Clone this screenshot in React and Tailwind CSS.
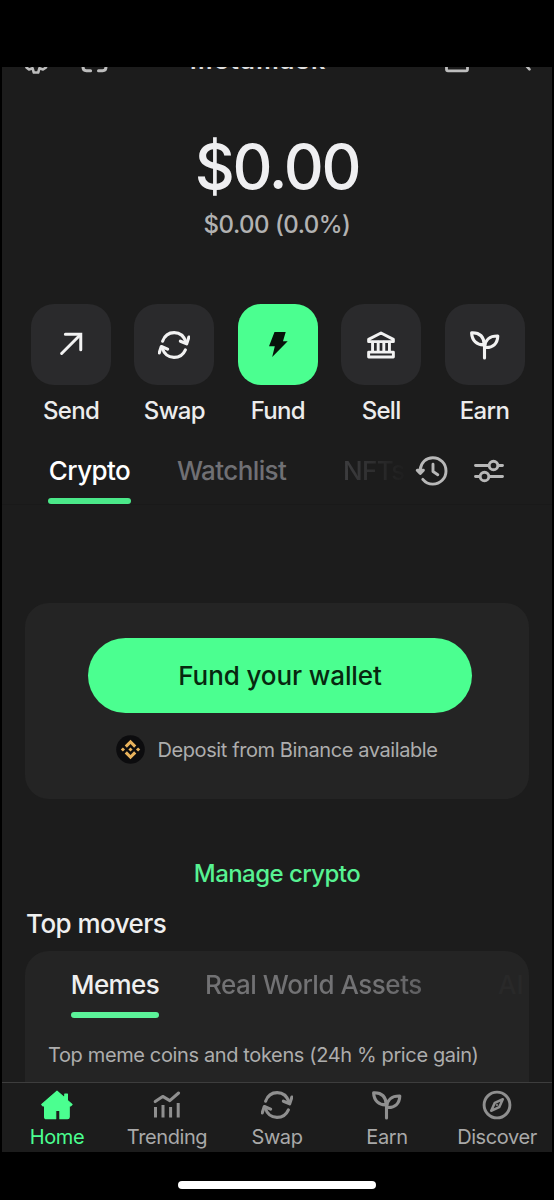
import React from 'react';

function SwapIcon({ className }) {
  return (
    <svg viewBox="0 0 32 32" className={className} fill="none" stroke="currentColor" strokeWidth="3.1" strokeLinecap="round" strokeLinejoin="round">
      <path d="M4.600 12.200C6.600 6.600 11 3.600 16.200 3.600c5.600 0 10 3.600 12 10" />
      <path d="M22.400 12.200l6.300 2.600 2.200-6.800" />
      <path d="M27.400 20.800c-2 4.600-6.200 7.600-11.400 7.600-5.600 0-10-3.600-12-10" />
      <path d="M9.600 20.200l-6.300-2.700-2.100 6.400" />
    </svg>
  );
}

function EarnIcon({ className }) {
  return (
    <svg viewBox="0 0 32 32" className={className} fill="none" stroke="currentColor" strokeWidth="3.100" strokeLinecap="round" strokeLinejoin="round">
      <path d="M15.500 29V15.600" />
      <path d="M15.300 15.800C7.800 16.200 3 11.600 2.600 3.800c7.600-.3 12.300 3.600 12.700 12z" />
      <path d="M15.600 18.400c.2-7.200 5.200-11.600 13.200-11.400-.2 7.400-4.800 12.200-13.200 11.400z" />
    </svg>
  );
}

function SendIcon({ className }) {
  return (
    <svg viewBox="0 0 32 32" className={className} fill="none" stroke="currentColor" strokeWidth="3.200" strokeLinecap="round" strokeLinejoin="miter">
      <path d="M6 25L26 5" />
      <path d="M10 4.600h16.400V21" />
    </svg>
  );
}

function BoltIcon({ className }) {
  return (
    <svg viewBox="0 0 32 32" className={className} fill="currentColor">
      <path d="M12.500 3h11.200l-2.700 9.300h4.700L10.200 28l2.600-10.800H7z" />
    </svg>
  );
}

function BankIcon({ className }) {
  return (
    <svg viewBox="0 0 32 32" className={className} fill="none" stroke="currentColor" strokeWidth="3.100" strokeLinecap="round" strokeLinejoin="round">
      <path d="M2.800 12.400V10L16 3.200 29.200 10v2.400z" />
      <path d="M7 13v10M13 13v10M19 13v10M25 13v10" />
      <path d="M2.800 23.600h26.400v5.200H2.800z" />
    </svg>
  );
}

function HistoryIcon() {
  return (
    <svg viewBox="0 0 34 32" className="h-8 w-[34px]" fill="none" stroke="currentColor" strokeWidth="2.900" strokeLinecap="round" strokeLinejoin="round">
      <path d="M5.200 14.500C6 7.600 11 2.700 17.800 2.700c7.400 0 13.200 5.800 13.200 13.200s-5.800 13.200-13.200 13.200c-4 0-7.600-1.800-10-4.700" />
      <path d="M18 9.200v7.300l4.800 3.200" />
      <path d="M2.200 15.200h6.200l-3.100 3.300z" fill="currentColor" />
    </svg>
  );
}

function FilterIcon() {
  return (
    <svg viewBox="0 0 32 26" className="h-[26px] w-8" fill="none" stroke="currentColor" strokeWidth="2.900" strokeLinecap="round">
      <path d="M2.500 7.500h13M25.500 7.500h4" />
      <circle cx="20.500" cy="7.500" r="4.300" />
      <path d="M2.500 18.500h4M16.500 18.500h13" />
      <circle cx="11.500" cy="18.500" r="4.300" />
    </svg>
  );
}

function HomeIcon({ className }) {
  return (
    <svg viewBox="0 0 32 32" className={className} fill="currentColor" stroke="currentColor" strokeWidth="1.200" strokeLinejoin="round">
      <path d="M16 2.200l7.800 6.800V5h2.600v6.400l4.600 4.100-1.600 1.500h-1.200V28c0 1-.6 1.700-1.700 1.700h-7.600V21.400h-4.200v8.300H5.300c-1.100 0-1.700-.7-1.700-1.700V17H2.200L.8 15.500z" />
    </svg>
  );
}

function TrendingIcon({ className }) {
  return (
    <svg viewBox="0 0 32 32" className={className} fill="none" stroke="currentColor" strokeWidth="3" strokeLinejoin="round">
      <path d="M4.500 18v10.500M12 16v12.500M19.600 18v10.500M27.200 14v14.500" />
      <path d="M4.200 12.600l7.500-5.200 7.100 4.200L27.600 4" strokeLinecap="round" />
    </svg>
  );
}

function DiscoverIcon({ className }) {
  return (
    <svg viewBox="0 0 32 32" className={className} fill="none" stroke="currentColor" strokeWidth="2.900" strokeLinejoin="round">
      <circle cx="16" cy="16" r="12.900" />
      <path d="M21.800 10.200l-3.600 8-8 3.600 3.600-8z" strokeWidth="2.500" />
      <circle cx="16" cy="16" r=".8" strokeWidth="1" />
    </svg>
  );
}

function BinanceLogo() {
  return (
    <svg viewBox="0 0 29 29" className="size-[29px]">
      <circle cx="14.500" cy="14.500" r="14.300" fill="#0c0c0e" />
      <g fill="#e9b35c">
        <path d="M14.500 4.700l5.800 5.800-2.200 2.200-3.600-3.600-3.600 3.600-2.200-2.200z" />
        <path d="M14.500 24.300l5.800-5.800-2.200-2.200-3.600 3.600-3.600-3.600-2.200 2.200z" />
        <path d="M14.500 12.400l2.100 2.100-2.100 2.100-2.100-2.100z" />
        <path d="M6.900 12.400L9 14.500l-2.100 2.100-2.100-2.100z" />
        <path d="M22.100 12.400l2.100 2.100-2.100 2.100-2.100-2.100z" />
      </g>
    </svg>
  );
}

const actions = [
  { label: 'Send', Icon: SendIcon },
  { label: 'Swap', Icon: SwapIcon },
  { label: 'Fund', Icon: BoltIcon, primary: true },
  { label: 'Sell', Icon: BankIcon },
  { label: 'Earn', Icon: EarnIcon },
];

const navItems = [
  { label: 'Home', Icon: HomeIcon, active: true },
  { label: 'Trending', Icon: TrendingIcon },
  { label: 'Swap', Icon: SwapIcon },
  { label: 'Earn', Icon: EarnIcon },
  { label: 'Discover', Icon: DiscoverIcon },
];

// Header is scrolled almost fully out of view, only its lower edge shows
function ScrolledHeader() {
  return (
    <header className="relative h-2 shrink-0 overflow-hidden text-[#bdbdbd]">
      <svg viewBox="0 0 550 8" className="h-2 w-[550px]" fill="none" stroke="currentColor" strokeWidth="2.600" strokeLinecap="round" strokeLinejoin="round">
        <path d="M24.500.5l2.500 2 3.500-1.300 1.300 4.300h4.400l1.300-4.300L41 2.500l3-2" />
        <path d="M81 0c0 2.400 1.200 3.700 3.400 3.700h4.200M96.500 3.700h4.100c2.200 0 3.400-1.300 3.400-3.700" strokeWidth="3" />
        <path d="M444.500-2v4.300c0 1 .5 1.600 1.500 1.600h18c1 0 1.500-.6 1.500-1.600V-2" strokeWidth="2.800" />
        <path d="M523.500-2l4 4.300" />
      </svg>
      <span className="absolute bottom-[-1px] left-[188px] text-[25px] leading-8 font-semibold tracking-[1.400px] text-[#e0e0e0]">
        metamask
      </span>
    </header>
  );
}

function App() {
  return (
    <div className="flex h-[1200px] w-[554px] flex-col overflow-hidden bg-black px-0.5 pt-[67px] font-['Inter',sans-serif] whitespace-nowrap">
      <main className="flex h-[1015px] shrink-0 flex-col overflow-hidden bg-[#1c1c1c]">
        <ScrolledHeader />

        <section className="flex flex-col items-center pt-[60px]">
          <h1 className="h-16 text-[62px] leading-[64px] font-medium tracking-[-2.2px] text-[#efeff1]">$0.00</h1>
          <p className="mt-3 h-7 text-[24px] leading-7 font-medium tracking-[-0.5px] text-[#b2b2b2]">$0.00 (0.0%)</p>
        </section>

        <section className="mt-[65px] flex justify-between pr-[27.500px] pl-[29px]">
          {actions.map(({ label, Icon, primary }) => (
            <div key={label} className="flex w-20 flex-col items-center">
              <div
                className={`flex h-[81px] w-20 items-center justify-center rounded-[23px] ${
                  primary ? 'bg-[#4bff90] text-[#07130b]' : 'bg-[#2a2a2c] text-[#f2f2f2]'
                }`}
              >
                <Icon className={label === 'Send' || label === 'Sell' ? 'size-[30px]' : 'size-8'} />
              </div>
              <span className="mt-3 h-7 text-[24px] leading-7 font-medium tracking-[-0.7px] text-[#ececec]">
                {label}
              </span>
            </div>
          ))}
        </section>

        <section className="mt-[19px] flex h-[61px] shrink-0 items-start border-b border-[#191919] pl-[46px]">
          <div className="flex h-[60px] w-[83px] flex-col items-center justify-between">
            <span className="pt-[11px] text-[26px] leading-8 font-medium tracking-[-0.6px] text-white">Crypto</span>
            <span className="h-1.5 w-full rounded-full bg-[#4be889]" />
          </div>
          <span className="ml-[46px] w-[111px] pt-[11px] text-[26px] leading-8 font-medium tracking-[-0.6px] text-[#707074]">
            Watchlist
          </span>
          <span className="ml-[55px] w-[65px] bg-linear-to-r from-[#3e3e40] to-[#1c1c1c] bg-clip-text pt-[11px] text-[26px] leading-8 font-medium tracking-[-0.6px] text-transparent">
            NFTs
          </span>
          <div className="ml-[7px] flex items-center gap-6 pt-[11px] text-[#b8b8b8]">
            <HistoryIcon />
            <FilterIcon />
          </div>
        </section>

        <section className="mx-[23px] mt-[98px] flex h-[196px] shrink-0 flex-col items-center rounded-[24px] bg-[#242424] pt-[35px]">
          <button className="ml-1.5 h-[75px] w-[384px] rounded-full bg-[#4bff90] text-[26px] leading-8 font-medium tracking-[-0.1px] text-[#07280f]">
            Fund your wallet
          </button>
          <div className="mt-[22px] flex items-center gap-3 text-[20px] text-[#adadad]">
            <BinanceLogo />
            <span className="leading-7 tracking-[-0.4px]">Deposit from Binance available</span>
          </div>
        </section>

        <button className="mt-[59px] h-8 text-[24px] leading-8 font-medium tracking-[-0.55px] text-[#57f292]">Manage crypto</button>

        <h2 className="mt-[18px] h-8 pl-6 text-[26px] leading-8 font-medium tracking-[-0.55px] text-[#efefef]">Top movers</h2>

        <section className="mx-[23px] mt-[11px] h-[160px] shrink-0 overflow-hidden rounded-t-[24px] bg-[#242424]">
          <div className="flex h-[67px] items-start pl-[46px]">
            <div className="flex h-[67px] w-[88px] flex-col items-center justify-between">
              <span className="pt-[18px] text-[26px] leading-8 font-medium tracking-[-0.6px] text-[#efefef]">Memes</span>
              <span className="h-1.5 w-full rounded-full bg-[#5bf399]" />
            </div>
            <span className="ml-[46px] w-[218px] bg-linear-to-r from-[#727274] from-80% to-[#5e5e60] bg-clip-text pt-[18px] text-[26px] leading-8 font-medium tracking-[-0.48px] text-transparent">
              Real World Assets
            </span>
            <span className="ml-[75px] pt-[18px] text-[26px] leading-8 font-medium text-[#292929]">AI</span>
          </div>
          <p className="mt-[23px] pl-[23px] text-[20px] leading-7 tracking-[-0.37px] text-[#adadad]">Top meme coins and tokens (24h % price gain)</p>
        </section>
      </main>

      <nav className="grid h-[70px] shrink-0 grid-cols-5 border-t border-[#3d3d3d] bg-[#1c1c1c]">
        {navItems.map(({ label, Icon, active }) => (
          <div
            key={label}
            className={`flex flex-col items-center pt-[6px] text-[20px] tracking-[-0.4px] ${active ? 'text-[#4bff90]' : 'text-[#a9a9a9]'}`}
          >
            <Icon className={active ? 'size-8' : 'size-8 text-[#8f8f8f]'} />
            <span className="mt-0.5 leading-7">{label}</span>
          </div>
        ))}
      </nav>

      <div className="mx-auto mt-[29px] h-2 w-[198px] shrink-0 rounded-full bg-white" />
    </div>
  );
}

export default App;
